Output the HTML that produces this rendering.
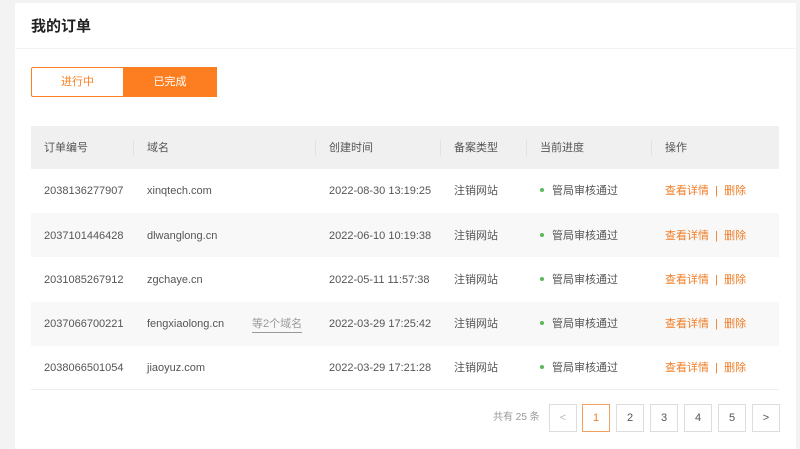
<!DOCTYPE html>
<html><head><meta charset="utf-8"><style>
*{margin:0;padding:0;box-sizing:border-box}
body{width:800px;height:444px;background:#f3f3f3;font-family:"Liberation Sans","Noto Sans CJK SC",sans-serif;position:relative;overflow:hidden;color:#555;font-size:11px}
.hd{position:absolute;left:15px;top:3px;width:781px;height:45px;background:#fff}
.hd h1{position:absolute;left:16px;top:12px;font-size:15px;font-weight:bold;color:#222}
.bd{position:absolute;left:15px;top:49px;width:781px;height:400px;background:#fff}
.tab{position:absolute;top:67px;height:30px;line-height:28px;text-align:center;font-size:11px;border:1px solid #fd7e21}
.t1{left:31px;width:93px;color:#fd7e21;background:#fff;border-radius:2px 0 0 2px}
.t2{left:123px;width:94px;color:#fff;background:#fd7e21}
.th{position:absolute;left:31px;top:126px;width:748px;height:43px;background:#f0f0f0}
.row{position:absolute;left:31px;width:748px;height:44px}
.alt{background:#f8f8f8}
.c{position:absolute;white-space:nowrap;line-height:14px}
.sep{position:absolute;top:14px;width:1px;height:16px;background:#e2e2e2}
.dot{display:inline-block;width:4px;height:4px;border-radius:50%;background:#5db75d;margin-right:8px;vertical-align:2px}
.op{color:#f07d26}
.pg{position:absolute;top:404px;width:28px;height:28px;border:1px solid #ddd;text-align:center;line-height:26px;color:#555;font-size:11px;background:#fff}
</style></head><body>
<div class="hd"><h1>我的订单</h1></div>
<div class="bd"></div>
<div class="tab t1">进行中</div><div class="tab t2">已完成</div>
<div class="th">
<div class="c" style="left:13px;top:15px">订单编号</div>
<div class="sep" style="left:102px"></div>
<div class="c" style="left:116px;top:15px">域名</div>
<div class="sep" style="left:284px"></div>
<div class="c" style="left:298px;top:15px">创建时间</div>
<div class="sep" style="left:409px"></div>
<div class="c" style="left:423px;top:15px">备案类型</div>
<div class="sep" style="left:495px"></div>
<div class="c" style="left:509px;top:15px">当前进度</div>
<div class="sep" style="left:620px"></div>
<div class="c" style="left:634px;top:15px">操作</div>
</div>

<div class="row" style="top:169px">
<div class="c" style="left:13px;top:15px">2038136277907</div><div class="c" style="left:116px;top:15px">xinqtech.com</div><div class="c" style="left:298px;top:15px">2022-08-30 13:19:25</div><div class="c" style="left:423px;top:15px">注销网站</div><div class="c" style="left:509px;top:15px"><span class="dot"></span>管局审核通过</div><div class="c op" style="left:634px;top:15px">查看详情 &nbsp;|&nbsp; 删除</div></div>
<div class="row alt" style="top:213px">
<div class="c" style="left:13px;top:16px">2037101446428</div><div class="c" style="left:116px;top:16px">dlwanglong.cn</div><div class="c" style="left:298px;top:16px">2022-06-10 10:19:38</div><div class="c" style="left:423px;top:16px">注销网站</div><div class="c" style="left:509px;top:16px"><span class="dot"></span>管局审核通过</div><div class="c op" style="left:634px;top:16px">查看详情 &nbsp;|&nbsp; 删除</div></div>
<div class="row" style="top:258px">
<div class="c" style="left:13px;top:15px">2031085267912</div><div class="c" style="left:116px;top:15px">zgchaye.cn</div><div class="c" style="left:298px;top:15px">2022-05-11 11:57:38</div><div class="c" style="left:423px;top:15px">注销网站</div><div class="c" style="left:509px;top:15px"><span class="dot"></span>管局审核通过</div><div class="c op" style="left:634px;top:15px">查看详情 &nbsp;|&nbsp; 删除</div></div>
<div class="row alt" style="top:302px">
<div class="c" style="left:13px;top:15px">2037066700221</div><div class="c" style="left:116px;top:15px">fengxiaolong.cn</div><div class="c" style="left:221px;top:15px;color:#999;border-bottom:1px solid #999;padding-bottom:1px">等2个域名</div><div class="c" style="left:298px;top:15px">2022-03-29 17:25:42</div><div class="c" style="left:423px;top:15px">注销网站</div><div class="c" style="left:509px;top:15px"><span class="dot"></span>管局审核通过</div><div class="c op" style="left:634px;top:15px">查看详情 &nbsp;|&nbsp; 删除</div></div>
<div class="row" style="top:346px;border-bottom:1px solid #eee">
<div class="c" style="left:13px;top:15px">2038066501054</div><div class="c" style="left:116px;top:15px">jiaoyuz.com</div><div class="c" style="left:298px;top:15px">2022-03-29 17:21:28</div><div class="c" style="left:423px;top:15px">注销网站</div><div class="c" style="left:509px;top:15px"><span class="dot"></span>管局审核通过</div><div class="c op" style="left:634px;top:15px">查看详情 &nbsp;|&nbsp; 删除</div></div>

<div class="c" style="left:493px;top:411px;color:#999;font-size:10px">共有 25 条</div>
<div class="pg" style="left:549px;color:#bbb">&lt;</div>
<div class="pg" style="left:582px;border-color:#f0a060;color:#f07d26">1</div>
<div class="pg" style="left:616px">2</div>
<div class="pg" style="left:650px">3</div>
<div class="pg" style="left:684px">4</div>
<div class="pg" style="left:718px">5</div>
<div class="pg" style="left:752px">&gt;</div>
</body></html>
